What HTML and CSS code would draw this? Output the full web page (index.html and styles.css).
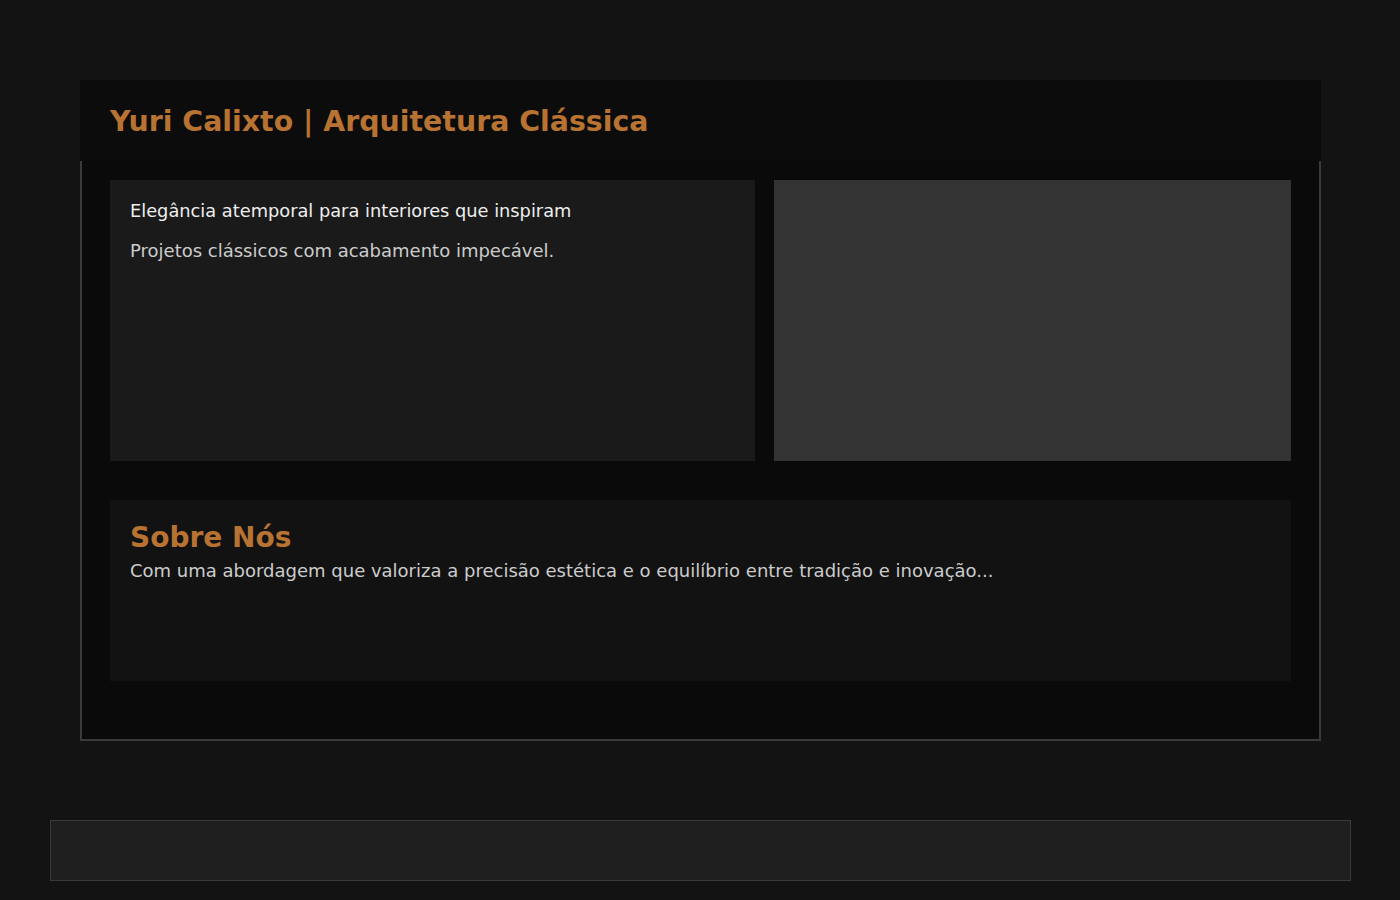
FILE: index.html
```html
<!DOCTYPE html>
<html lang="pt">
<head>
<meta charset="utf-8">
<title>Yuri Calixto | Arquitetura Clássica</title>
<link rel="stylesheet" href="styles.css">
</head>
<body>
<div class="site">
  <header class="site-header">
    <h1 class="brand">Yuri Calixto | Arquitetura Clássica</h1>
  </header>
  <main class="main">
    <section class="hero">
      <div class="hero-text">
        <p class="hero-lead">Elegância atemporal para interiores que inspiram</p>
        <p class="hero-sub">Projetos clássicos com acabamento impecável.</p>
      </div>
      <div class="hero-image"></div>
    </section>
    <section class="about">
      <h2 class="about-title">Sobre Nós</h2>
      <p class="about-text">Com uma abordagem que valoriza a precisão estética e o equilíbrio entre tradição e inovação...</p>
    </section>
  </main>
</div>
<footer class="site-footer"></footer>
</body>
</html>
```

FILE: styles.css
```css
* { box-sizing: border-box; }
html, body { margin: 0; padding: 0; }
body {
  background: #131313;
  font-family: "DejaVu Sans", Verdana, sans-serif;
  color: #cccccc;
  min-height: 900px;
  padding-top: 80px;
}
.site {
  margin: 0 79px 0 80px;
}
.site-header {
  height: 81px;
  background: #0c0c0c;
  padding: 25px 30px 0;
}
.brand {
  margin: 0;
  font-size: 28.4px;
  line-height: 33px;
  font-weight: bold;
  color: #b87333;
}
.main {
  background: #0a0a0a;
  border: 2px solid #3a3a3a;
  border-top: none;
  padding: 19px 28px 58px;
  height: 580px;
}
.hero {
  display: grid;
  grid-template-columns: 645px 1fr;
  column-gap: 19px;
  height: 281px;
}
.hero-text {
  background: #1a1a1a;
  padding: 20px;
}
.hero-lead {
  margin: 0;
  font-size: 17.8px;
  line-height: 21px;
  color: #eeeeee;
}
.hero-sub {
  margin: 19px 0 0;
  font-size: 18px;
  line-height: 21px;
  color: #cccccc;
}
.hero-image {
  background: #333333;
}
.about {
  margin-top: 39px;
  background: #121212;
  height: 181px;
  padding: 22px 20px 20px;
}
.about-title {
  margin: 0 0 6px;
  font-size: 28px;
  line-height: 32px;
  font-weight: bold;
  color: #b87333;
}
.about-text {
  margin: 0;
  font-size: 18px;
  line-height: 21px;
  color: #cccccc;
}
.site-footer {
  margin: 79px 49px 0 50px;
  height: 61px;
  background: #1f1f1f;
  border: 1px solid #3a3a3a;
}
```
